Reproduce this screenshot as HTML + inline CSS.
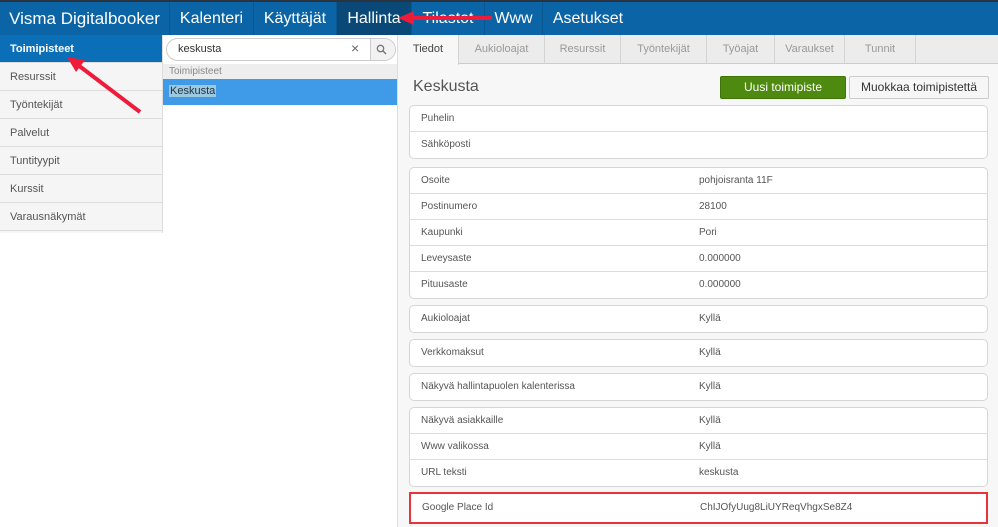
<!DOCTYPE html>
<html><head><meta charset="utf-8"><style>
*{box-sizing:border-box;margin:0;padding:0}
body{width:998px;height:527px;overflow:hidden;font-family:"Liberation Sans","DejaVu Sans",sans-serif;background:#fff;position:relative;font-size:11px;color:#444}
.hdr{position:absolute;left:0;top:0;width:998px;height:35px;background:#0b64a6;border-top:2px solid #2a3340}
.hdr div{position:absolute;top:0;height:33px;line-height:33px;color:#fff;font-size:16px;text-align:center;border-right:1px solid #0a5690}
.side{position:absolute;left:0;top:35px;width:163px;height:198px;background:#f5f5f5;border-right:1px solid #ddd}
.side div{height:28px;line-height:28px;padding-left:10px;border-bottom:1px solid #ddd;font-size:11px;color:#555}
.side .act{background:#0b6fb8;color:#fff;font-weight:bold}
.vline{position:absolute;left:162px;top:35px;width:1px;height:492px;background:#ddd}
.mid{position:absolute;left:163px;top:35px;width:235px;height:492px;background:#fff;border-right:1px solid #ddd}
.right{position:absolute;left:398px;top:35px;width:600px;height:492px;background:#f7f7f7}
.tabs{position:absolute;left:0;top:0;width:600px;height:29px;background:#ececec;border-bottom:1px solid #ccc}
.tab{position:absolute;top:0;height:29px;line-height:29px;text-align:center;color:#999;font-size:11px;border-right:1px solid #d4d4d4}
.grp{position:absolute;left:11px;width:579px;background:#fff;border:1px solid #d6d6d6;border-radius:5px}
.row{height:26px;line-height:26px;border-bottom:1px solid #ddd;position:relative;padding-left:11px;font-size:10px;color:#555}
.row:last-child{border-bottom:none}
.row span{position:absolute;left:289px}
</style></head><body>
<div class="hdr">
<div style="left:0;width:170px;font-size:17px">Visma Digitalbooker</div>
<div style="left:170px;width:84px">Kalenteri</div>
<div style="left:254px;width:83px">Käyttäjät</div>
<div style="left:337px;width:75px;background:#094877">Hallinta</div>
<div style="left:412px;width:73px">Tilastot</div>
<div style="left:485px;width:58px">Www</div>
<div style="left:543px;width:90px;border:none">Asetukset</div>
</div>
<div class="side">
<div class="act">Toimipisteet</div><div>Resurssit</div><div>Työntekijät</div><div>Palvelut</div><div>Tuntityypit</div><div>Kurssit</div><div>Varausnäkymät</div>
</div>
<div class="mid">
<div style="position:absolute;left:3px;top:3px;width:230px;height:23px;border:1px solid #ccc;border-radius:12px;background:#fff"></div>
<div style="position:absolute;left:15px;top:8px;font-size:11px;color:#333">keskusta</div>
<div style="position:absolute;left:188px;top:5px;font-size:14px;color:#666">×</div>
<div style="position:absolute;left:207px;top:4px;width:25px;height:21px;border-left:1px solid #ccc;background:#f2f2f2;border-radius:0 11px 11px 0"></div>
<svg style="position:absolute;left:213px;top:9px" width="11" height="11"><circle cx="4.5" cy="4.5" r="3.2" fill="none" stroke="#777" stroke-width="1.3"/><line x1="7" y1="7" x2="10" y2="10" stroke="#777" stroke-width="1.4"/></svg>
<div style="position:absolute;left:0;top:29px;width:234px;height:15px;background:#eee;color:#888;font-size:10px;line-height:15px;padding-left:6px">Toimipisteet</div>
<div style="position:absolute;left:0;top:44px;width:234px;height:26px;background:#3f9ae8;"><span style="position:absolute;left:6px;top:6px;background:#9cc9e0;color:#234;font-size:11px;padding:0 1px">Keskusta</span></div>
</div>
<div class="right">
<div class="tabs">
<div class="tab" style="left:0;width:61px;background:#f7f7f7;color:#444;height:30px">Tiedot</div>
<div class="tab" style="left:61px;width:86px">Aukioloajat</div>
<div class="tab" style="left:147px;width:76px">Resurssit</div>
<div class="tab" style="left:223px;width:86px">Työntekijät</div>
<div class="tab" style="left:309px;width:68px">Työajat</div>
<div class="tab" style="left:377px;width:70px">Varaukset</div>
<div class="tab" style="left:447px;width:71px">Tunnit</div>
</div>
<div style="position:absolute;left:15px;top:43px;font-size:16px;color:#555">Keskusta</div>
<div style="position:absolute;left:322px;top:41px;width:126px;height:23px;background:#4f8a10;border:1px solid #3f7408;border-radius:2px;color:#fff;text-align:center;line-height:21px;font-size:12px">Uusi toimipiste</div>
<div style="position:absolute;left:451px;top:41px;width:140px;height:23px;background:#f6f6f6;border:1px solid #ccc;border-radius:2px;color:#333;text-align:center;line-height:21px;font-size:12px">Muokkaa toimipistettä</div>
<div class="grp" style="top:70px"><div class="row">Puhelin</div><div class="row">Sähköposti</div></div>
<div class="grp" style="top:132px"><div class="row">Osoite<span>pohjoisranta 11F</span></div><div class="row">Postinumero<span>28100</span></div><div class="row">Kaupunki<span>Pori</span></div><div class="row">Leveysaste<span>0.000000</span></div><div class="row">Pituusaste<span>0.000000</span></div></div>
<div class="grp" style="top:270px"><div class="row">Aukioloajat<span>Kyllä</span></div></div>
<div class="grp" style="top:304px"><div class="row">Verkkomaksut<span>Kyllä</span></div></div>
<div class="grp" style="top:338px"><div class="row">Näkyvä hallintapuolen kalenterissa<span>Kyllä</span></div></div>
<div class="grp" style="top:372px"><div class="row">Näkyvä asiakkaille<span>Kyllä</span></div><div class="row">Www valikossa<span>Kyllä</span></div><div class="row">URL teksti<span>keskusta</span></div></div>
<div class="grp" style="top:457px;border:2px solid #e8333a;border-radius:0;height:32px"><div class="row" style="line-height:28px">Google Place Id<span>ChIJOfyUug8LiUYReqVhgxSe8Z4</span></div></div>
</div>
<svg style="position:absolute;left:0;top:0" width="998" height="527">
<line x1="492" y1="18" x2="412" y2="18" stroke="#ee1c3a" stroke-width="4"/>
<polygon points="398,18 414,11 414,25" fill="#ee1c3a"/>
<line x1="140" y1="112" x2="78" y2="65" stroke="#ee1c3a" stroke-width="4"/>
<polygon points="67,57 85,60 76,72" fill="#ee1c3a"/>
</svg>
</body></html>
